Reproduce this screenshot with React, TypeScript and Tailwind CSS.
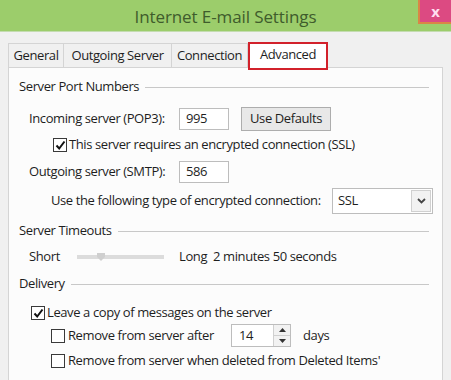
import React from 'react';

// Small checkbox used in the dialog
const Check = ({ checked }: { checked?: boolean }) => (
    <span className="w-[14px] h-[14px] border border-[#3a3a3a] bg-white flex items-center justify-center shrink-0">
        {checked && (
            <svg width="11" height="11" viewBox="0 0 11 11">
                <path d="M1.5 5.5 L4.2 8.5 L9.5 1.5" fill="none" stroke="#111" strokeWidth="2" />
            </svg>
        )}
    </span>
);

// Group title with a rule that runs to the right edge
const GroupHeader = ({ title, className }: { title: string; className: string }) => (
    <div className={`h-[16px] flex items-center gap-[6px] ${className}`}>
        <span className="whitespace-nowrap">{title}</span>
        <div className="flex-1 h-px bg-[#c8c8c8]" />
    </div>
);

const App: React.FC = () => {
    return (
        <div className="w-[451px] h-[380px] overflow-hidden bg-[#f0f0f0] text-[13px] text-[#1e1e1e] font-['Open_Sans',sans-serif] tracking-[-0.4px] whitespace-nowrap">

            {/* Title bar */}
            <div className="h-[32px] bg-[#9ccd6b] border-b border-[#c4dcb0] flex items-start relative">
                <div className="flex-1 text-center text-[17px] text-[#3f5c2c] pt-[4px] tracking-[-0.1px]">
                    Internet E-mail Settings
                </div>
                <div className="absolute right-0 top-0 w-[33px] h-[24px] bg-[#dc4a82] border-l-2 border-b-2 border-[#d98546] flex items-center justify-center text-[#fde] font-bold text-[15px]">
                    x
                </div>
            </div>

            {/* Tabs */}
            <div className="flex items-end pl-[8px] h-[35px]">
                <div className="h-[24px] w-[56px] border border-[#d4d4d4] border-b-0 bg-[#f0f0f0] flex items-center justify-center">General</div>
                <div className="h-[24px] w-[108px] border border-[#d4d4d4] border-b-0 border-l-0 bg-[#f0f0f0] flex items-center justify-center">Outgoing Server</div>
                <div className="h-[24px] w-[76px] border border-[#d4d4d4] border-b-0 border-l-0 bg-[#f0f0f0] flex items-center justify-center">Connection</div>
                <div className="h-[28px] w-[80px] -mb-[3px] border-2 border-[#d2212b] bg-white flex items-start justify-center pt-[1px] relative z-10">Advanced</div>
            </div>

            {/* Panel */}
            <div className="mx-[8px] h-[320px] bg-[#fcfcfc] border border-[#d4d4d4] pl-[10px] pr-[13px] flex flex-col">

                <GroupHeader title="Server Port Numbers" className="mt-[11px]" />

                <div className="mt-[12px] ml-[10px] h-[24px] flex items-center">
                    <span className="w-[150px]">Incoming server (POP3):</span>
                    <div className="w-[50px] h-[22px] border border-[#bdbdbd] bg-white flex items-center pl-[6px]">995</div>
                    <div className="ml-[12px] w-[90px] h-[24px] border border-[#adadad] bg-[#e8e8e8] flex items-center justify-center">Use Defaults</div>
                </div>

                <div className="mt-[6px] ml-[34px] h-[16px] flex items-center gap-[2px]">
                    <Check checked />
                    <span>This server requires an encrypted connection (SSL)</span>
                </div>

                <div className="mt-[8px] ml-[10px] h-[22px] flex items-center">
                    <span className="w-[150px]">Outgoing server (SMTP):</span>
                    <div className="w-[50px] h-[22px] border border-[#bdbdbd] bg-white flex items-center pl-[6px]">586</div>
                </div>

                <div className="mt-[5px] ml-[32px] -mr-[6px] h-[26px] flex items-center">
                    <span className="w-[281px] shrink-0">Use the following type of encrypted connection:</span>
                    <div className="w-[101px] h-[26px] shrink-0 border border-[#bdbdbd] bg-white flex items-center">
                        <span className="flex-1 pl-[5px]">SSL</span>
                        <div className="w-[20px] h-[22px] mr-[1px] border border-[#d0d0d0] bg-[#f2f2f2] flex items-center justify-center">
                            <svg width="9" height="6" viewBox="0 0 9 6">
                                <path d="M1 1 L4.5 4.5 L8 1" fill="none" stroke="#444" strokeWidth="1.8" />
                            </svg>
                        </div>
                    </div>
                </div>

                <GroupHeader title="Server Timeouts" className="mt-[9px]" />

                <div className="mt-[10px] ml-[10px] h-[16px] flex items-center">
                    <span className="w-[48px]">Short</span>
                    <div className="w-[87px] h-[4px] bg-[#dcdcdc] relative">
                        <div className="absolute left-[20px] -top-[2px] w-[8px] h-[8px] bg-[#cfcfcf] [clip-path:polygon(0_0,100%_0,100%_50%,50%_100%,0_50%)]" />
                    </div>
                    <span className="ml-[15px]">Long</span>
                    <span className="ml-[6px]">2 minutes 50 seconds</span>
                </div>

                <GroupHeader title="Delivery" className="mt-[11px]" />

                <div className="mt-[13px] ml-[12px] h-[16px] flex items-center gap-[2px]">
                    <Check checked />
                    <span>Leave a copy of messages on the server</span>
                </div>

                <div className="mt-[3px] ml-[32px] h-[23px] flex items-center">
                    <Check />
                    <span className="ml-[3px] w-[163px]">Remove from server after</span>
                    <div className="w-[60px] h-[23px] border border-[#bdbdbd] bg-white flex items-center">
                        <span className="flex-1 pl-[7px]">14</span>
                        <div className="w-[17px] h-[21px] border-l border-[#d0d0d0] bg-[#f2f2f2] flex flex-col">
                            <div className="flex-1 flex items-center justify-center border-b border-[#d0d0d0]">
                                <svg width="7" height="4" viewBox="0 0 7 4"><path d="M0 4 L3.5 0 L7 4 Z" fill="#333" /></svg>
                            </div>
                            <div className="flex-1 flex items-center justify-center">
                                <svg width="7" height="4" viewBox="0 0 7 4"><path d="M0 0 L3.5 4 L7 0 Z" fill="#333" /></svg>
                            </div>
                        </div>
                    </div>
                    <span className="ml-[12px]">days</span>
                </div>

                <div className="mt-[6px] ml-[32px] h-[16px] flex items-center">
                    <Check />
                    <span className="ml-[3px]">Remove from server when deleted from Deleted Items'</span>
                </div>
            </div>
        </div>
    );
};

export default App;
